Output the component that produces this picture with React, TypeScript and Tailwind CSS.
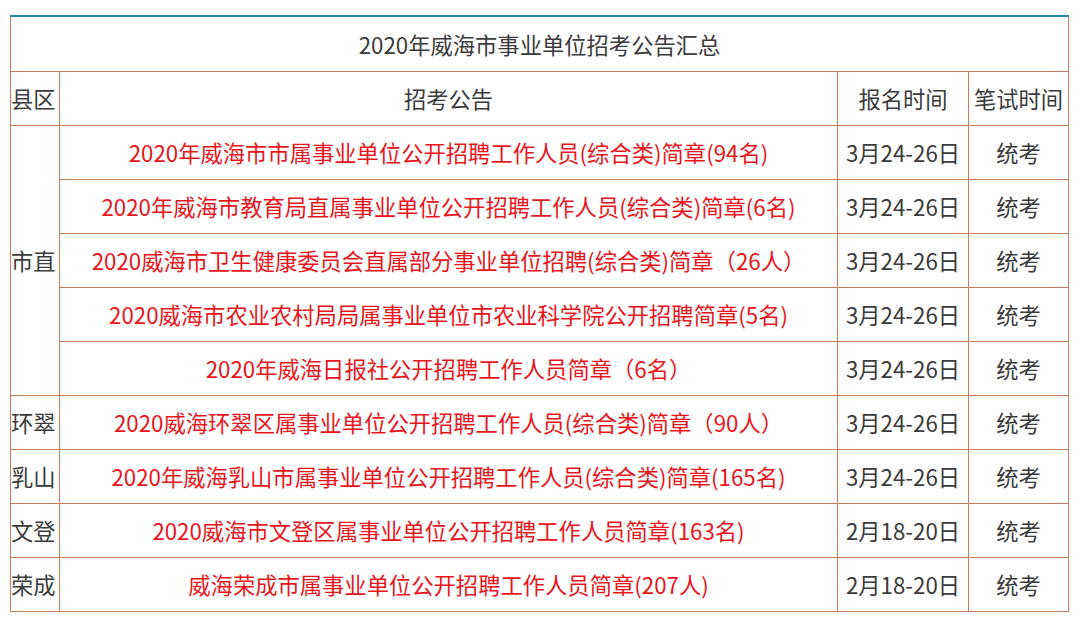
const font = { fontFamily: '"Microsoft YaHei", "Noto Sans CJK SC", "Noto Sans", sans-serif' };

const rows = [
  { title: "2020年威海市市属事业单位公开招聘工作人员(综合类)简章(94名)", date: "3月24-26日" },
  { title: "2020年威海市教育局直属事业单位公开招聘工作人员(综合类)简章(6名)", date: "3月24-26日" },
  { title: "2020威海市卫生健康委员会直属部分事业单位招聘(综合类)简章（26人）", date: "3月24-26日" },
  { title: "2020威海市农业农村局局属事业单位市农业科学院公开招聘简章(5名)", date: "3月24-26日" },
  { title: "2020年威海日报社公开招聘工作人员简章（6名）", date: "3月24-26日" },
];

const others = [
  { area: "环翠", title: "2020威海环翠区属事业单位公开招聘工作人员(综合类)简章（90人）", date: "3月24-26日" },
  { area: "乳山", title: "2020年威海乳山市属事业单位公开招聘工作人员(综合类)简章(165名)", date: "3月24-26日" },
  { area: "文登", title: "2020威海市文登区属事业单位公开招聘工作人员简章(163名)", date: "2月18-20日" },
  { area: "荣成", title: "威海荣成市属事业单位公开招聘工作人员简章(207人)", date: "2月18-20日" },
];

const cell = "border border-[#c97a58] p-0 h-[54px] text-center align-middle";

export default function App() {
  return (
    <div className="w-[1080px] h-[622px] bg-white pt-[15px] pl-[10px]" style={font}>
      <table className="border-collapse table-fixed w-[1058px] text-[22.3px] leading-none text-[#3b3b3b]">
        <colgroup>
          <col className="w-[49px]" />
          <col className="w-[778px]" />
          <col className="w-[131px]" />
          <col className="w-[100px]" />
        </colgroup>
        <tbody>
          <tr>
            <td colSpan={4} className="border border-[#c97a58] border-t-2 border-t-[#1f8ea8] h-[55px] text-center align-middle">
              2020年威海市事业单位招考公告汇总
            </td>
          </tr>
          <tr>
            <td className={cell + " text-left"}>县区</td>
            <td className={cell}>招考公告</td>
            <td className={cell}>报名时间</td>
            <td className={cell}>笔试时间</td>
          </tr>
          {rows.map((r, i) => (
            <tr key={i}>
              {i === 0 && (
                <td rowSpan={5} className={cell + " text-left"}>市直</td>
              )}
              <td className={cell + " text-[#e8161c]"}>{r.title}</td>
              <td className={cell}>{r.date}</td>
              <td className={cell}>统考</td>
            </tr>
          ))}
          {others.map((r) => (
            <tr key={r.area}>
              <td className={cell + " text-left"}>{r.area}</td>
              <td className={cell + " text-[#e8161c]"}>{r.title}</td>
              <td className={cell}>{r.date}</td>
              <td className={cell}>统考</td>
            </tr>
          ))}
        </tbody>
      </table>
    </div>
  );
}
